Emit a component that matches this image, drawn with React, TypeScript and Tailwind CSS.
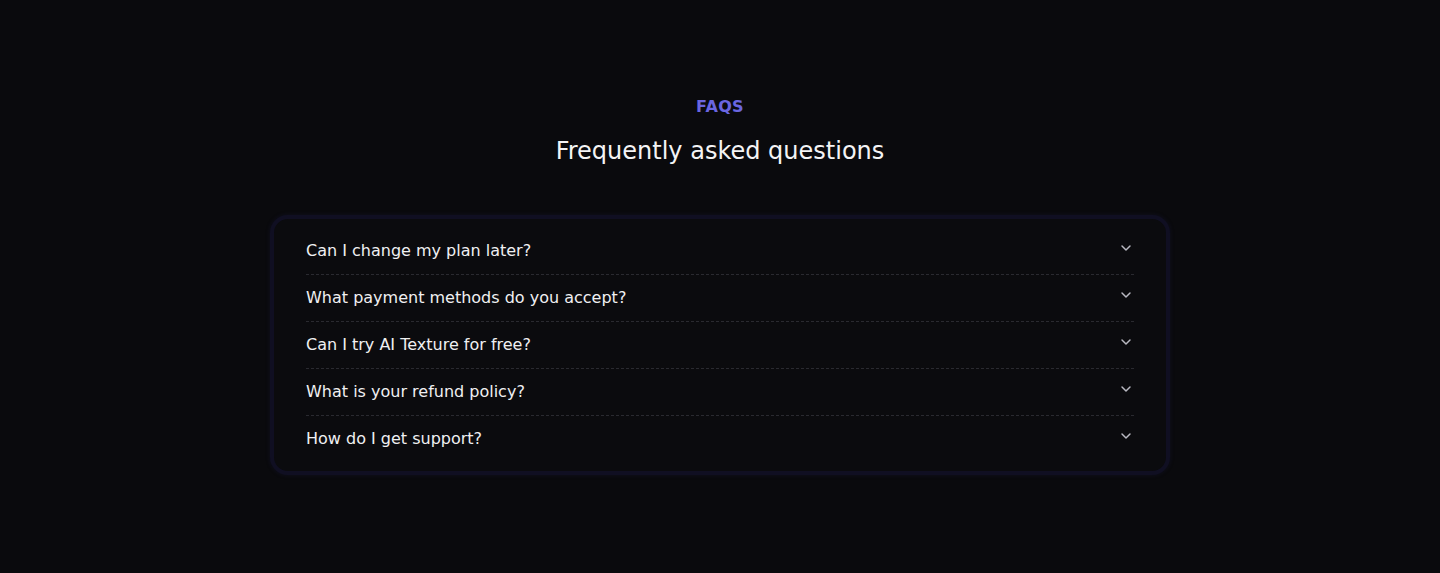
import React from "react";

const questions = [
  "Can I change my plan later?",
  "What payment methods do you accept?",
  "Can I try AI Texture for free?",
  "What is your refund policy?",
  "How do I get support?",
];

function Chevron() {
  return (
    <svg width="16" height="16" viewBox="0 0 24 24" fill="none" stroke="#b9b9c2" strokeWidth="2.2" strokeLinecap="round" strokeLinejoin="round" className="-mt-[7px]">
      <path d="M6 9l6 6 6-6" />
    </svg>
  );
}

export default function App() {
  return (
    <div
      className="min-h-[573px] w-full bg-[#0a0a0d] text-white"
      style={{ fontFamily: '"DejaVu Sans", sans-serif' }}
    >
      <div className="flex flex-col items-center pt-[95px] pb-[99px]">
        <p className="text-base font-bold leading-6 tracking-[0.02em] text-[#6a66e0]">FAQS</p>
        <h2 className="mt-4 text-2xl leading-8 text-[#f4f4f5]">Frequently asked questions</h2>
        <div className="mt-12 w-[900px] rounded-[18px] border-4 border-[#100f22] bg-[#0b0b0e] px-8 py-[9px] shadow-[0_0_4px_rgba(30,28,70,0.35)]">
          {questions.map((q, i) => (
            <div
              key={q}
              className={`flex items-center justify-between ${i < questions.length - 1 ? "h-[47px] border-b border-dashed border-[#2a2a30]" : "h-[46px]"}`}
            >
              <span className="text-base leading-6 text-[#f0f0f2]">{q}</span>
              <span><Chevron /></span>
            </div>
          ))}
        </div>
      </div>
    </div>
  );
}
